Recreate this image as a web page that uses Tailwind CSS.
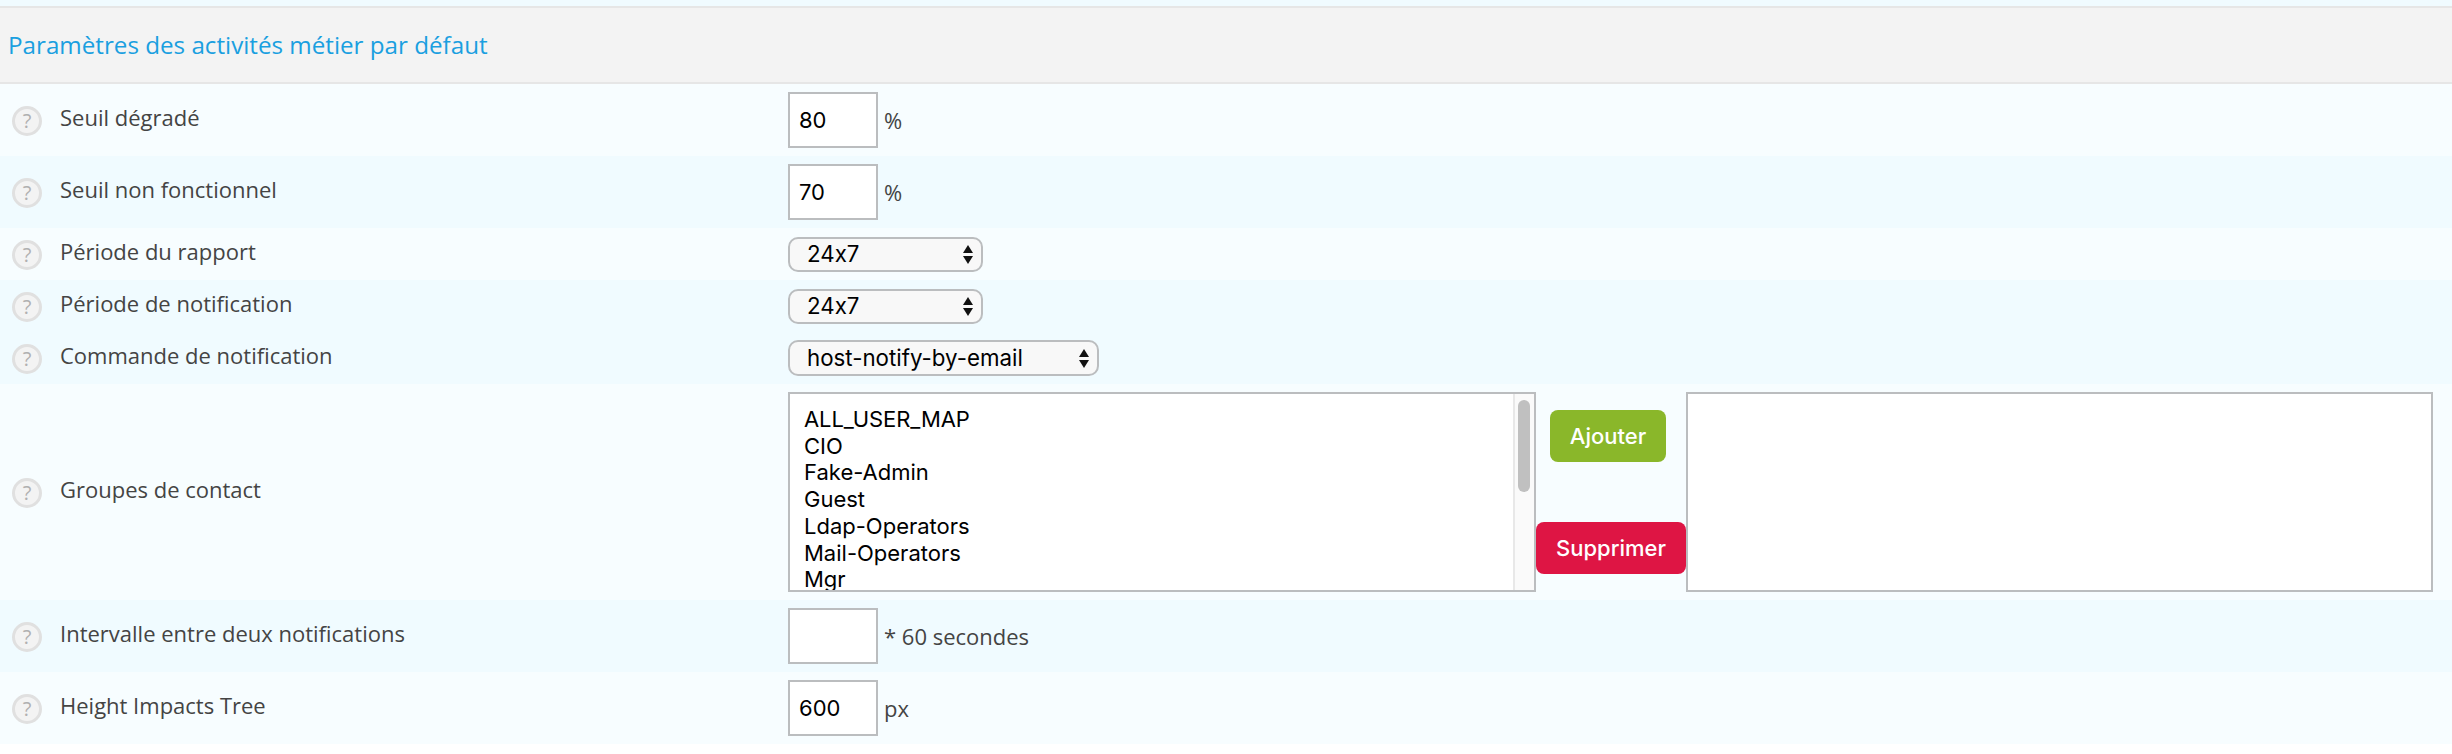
<!DOCTYPE html>
<html lang="fr">
<head>
  <meta charset="UTF-8">
  <title>Paramètres des activités métier par défaut</title>
  <script src="https://cdn.jsdelivr.net/npm/@tailwindcss/browser@4"></script>
</head>
<body class="h-[754px] overflow-hidden bg-white font-['Open_Sans',sans-serif] text-[22px] text-[#444]">
  <div class="h-[6px] bg-[#f0fbff]"></div>
  <div class="flex h-[78px] items-center border-y-2 border-[#e6e6e6] bg-[#f3f3f3] pl-[8px] text-[24.2px] text-[#1a9fe0]">Paramètres des activités métier par défaut</div>

  <div class="flex h-[72px] items-center bg-[#f7fdff]">
    <div class="flex w-[788px] items-center pl-3">
      <span class="mt-[2px] flex h-[30px] w-[30px] items-center justify-center rounded-full border-[3px] border-[#e0e0e0] bg-[#f3f3f3] text-[20px] text-[#b0b0b0]">?</span>
      <span class="ml-[18px] pb-[6px]">Seuil dégradé</span>
    </div>
    <input value="80" class="h-[56px] w-[90px] border-2 border-[#bbbdbf] bg-white pl-[9px] font-['Inter',sans-serif] text-[22px] text-black">
    <span class="ml-[6px]">%</span>
  </div>

  <div class="flex h-[72px] items-center bg-[#f0fbff]">
    <div class="flex w-[788px] items-center pl-3">
      <span class="mt-[2px] flex h-[30px] w-[30px] items-center justify-center rounded-full border-[3px] border-[#e0e0e0] bg-[#f3f3f3] text-[20px] text-[#b0b0b0]">?</span>
      <span class="ml-[18px] pb-[6px]">Seuil non fonctionnel</span>
    </div>
    <input value="70" class="h-[56px] w-[90px] border-2 border-[#bbbdbf] bg-white pl-[9px] font-['Inter',sans-serif] text-[22px] text-black">
    <span class="ml-[6px]">%</span>
  </div>

  <div class="flex h-[52px] items-center bg-[#f7fdff]">
    <div class="flex w-[788px] items-center pl-3">
      <span class="mt-[2px] flex h-[30px] w-[30px] items-center justify-center rounded-full border-[3px] border-[#e0e0e0] bg-[#f3f3f3] text-[20px] text-[#b0b0b0]">?</span>
      <span class="ml-[18px] pb-[6px]">Période du rapport</span>
    </div>
    <div class="flex h-[35px] w-[195px] items-center justify-between rounded-[10px] border-2 border-[#bbbdbf] bg-[#f8f8f8] pl-[17px] pr-[8px] font-['Inter',sans-serif] text-[22.3px] text-black [font-feature-settings:'calt'_0]">
      <span>24x7</span>
      <svg width="10" height="19" viewBox="0 0 10 19"><path d="M5 0L10 8H0ZM5 19L0 11H10Z" fill="#111"/></svg>
    </div>
  </div>

  <div class="flex h-[52px] items-center bg-[#f0fbff]">
    <div class="flex w-[788px] items-center pl-3">
      <span class="mt-[2px] flex h-[30px] w-[30px] items-center justify-center rounded-full border-[3px] border-[#e0e0e0] bg-[#f3f3f3] text-[20px] text-[#b0b0b0]">?</span>
      <span class="ml-[18px] pb-[6px]">Période de notification</span>
    </div>
    <div class="flex h-[35px] w-[195px] items-center justify-between rounded-[10px] border-2 border-[#bbbdbf] bg-[#f8f8f8] pl-[17px] pr-[8px] font-['Inter',sans-serif] text-[22.3px] text-black [font-feature-settings:'calt'_0]">
      <span>24x7</span>
      <svg width="10" height="19" viewBox="0 0 10 19"><path d="M5 0L10 8H0ZM5 19L0 11H10Z" fill="#111"/></svg>
    </div>
  </div>

  <div class="flex h-[52px] items-center bg-[#f0fbff]">
    <div class="flex w-[788px] items-center pl-3">
      <span class="mt-[2px] flex h-[30px] w-[30px] items-center justify-center rounded-full border-[3px] border-[#e0e0e0] bg-[#f3f3f3] text-[20px] text-[#b0b0b0]">?</span>
      <span class="ml-[18px] pb-[6px]">Commande de notification</span>
    </div>
    <div class="flex h-[36px] w-[311px] items-center justify-between rounded-[10px] border-2 border-[#bbbdbf] bg-[#f8f8f8] pl-[17px] pr-[8px] font-['Inter',sans-serif] text-[22.3px] text-black">
      <span>host-notify-by-email</span>
      <svg width="10" height="19" viewBox="0 0 10 19"><path d="M5 0L10 8H0ZM5 19L0 11H10Z" fill="#111"/></svg>
    </div>
  </div>

  <div class="flex h-[216px] items-center bg-[#f7fdff]">
    <div class="flex w-[788px] items-center pl-3">
      <span class="mt-[2px] flex h-[30px] w-[30px] items-center justify-center rounded-full border-[3px] border-[#e0e0e0] bg-[#f3f3f3] text-[20px] text-[#b0b0b0]">?</span>
      <span class="ml-[18px] pb-[6px]">Groupes de contact</span>
    </div>
    <div class="flex h-[200px] w-[748px] overflow-hidden border-2 border-[#bbbdbf] bg-white">
      <div class="flex-1 pl-[14px] pt-[12px] font-['Inter',sans-serif] text-[22px] leading-[26.7px] text-black">
        <div class="tracking-[-0.1px]">ALL_USER_MAP</div>
        <div>CIO</div>
        <div>Fake-Admin</div>
        <div>Guest</div>
        <div>Ldap-Operators</div>
        <div>Mail-Operators</div>
        <div>Mgr</div>
      </div>
      <div class="w-[21px] border-l-2 border-[#e8e8e8] bg-[#fafafa] pl-[3px] pt-[6px]">
        <div class="h-[92px] w-[12px] rounded-full bg-[#c0c0c0]"></div>
      </div>
    </div>
    <div class="flex h-[200px] w-[150px] flex-col">
      <button class="ml-[14px] mt-[18px] h-[52px] w-[116px] rounded-[8px] bg-[#8ab72a] font-['Inter',sans-serif] text-[22px] font-medium text-white">Ajouter</button>
      <button class="mt-[60px] h-[52px] w-[150px] rounded-[8px] bg-[#de1544] font-['Inter',sans-serif] text-[22px] font-medium text-white">Supprimer</button>
    </div>
    <div class="h-[200px] w-[747px] border-2 border-[#bbbdbf] bg-white"></div>
  </div>

  <div class="flex h-[72px] items-center bg-[#f0fbff]">
    <div class="flex w-[788px] items-center pl-3">
      <span class="mt-[2px] flex h-[30px] w-[30px] items-center justify-center rounded-full border-[3px] border-[#e0e0e0] bg-[#f3f3f3] text-[20px] text-[#b0b0b0]">?</span>
      <span class="ml-[18px] pb-[6px]">Intervalle entre deux notifications</span>
    </div>
    <input class="h-[56px] w-[90px] border-2 border-[#bbbdbf] bg-white pl-[9px] font-['Inter',sans-serif] text-[22px] text-black">
    <span class="ml-[6px]">* 60 secondes</span>
  </div>

  <div class="flex h-[72px] items-center bg-[#f7fdff]">
    <div class="flex w-[788px] items-center pl-3">
      <span class="mt-[2px] flex h-[30px] w-[30px] items-center justify-center rounded-full border-[3px] border-[#e0e0e0] bg-[#f3f3f3] text-[20px] text-[#b0b0b0]">?</span>
      <span class="ml-[18px] pb-[6px]">Height Impacts Tree</span>
    </div>
    <input value="600" class="h-[56px] w-[90px] border-2 border-[#bbbdbf] bg-white pl-[9px] font-['Inter',sans-serif] text-[22px] text-black">
    <span class="ml-[6px]">px</span>
  </div>
</body>
</html>
